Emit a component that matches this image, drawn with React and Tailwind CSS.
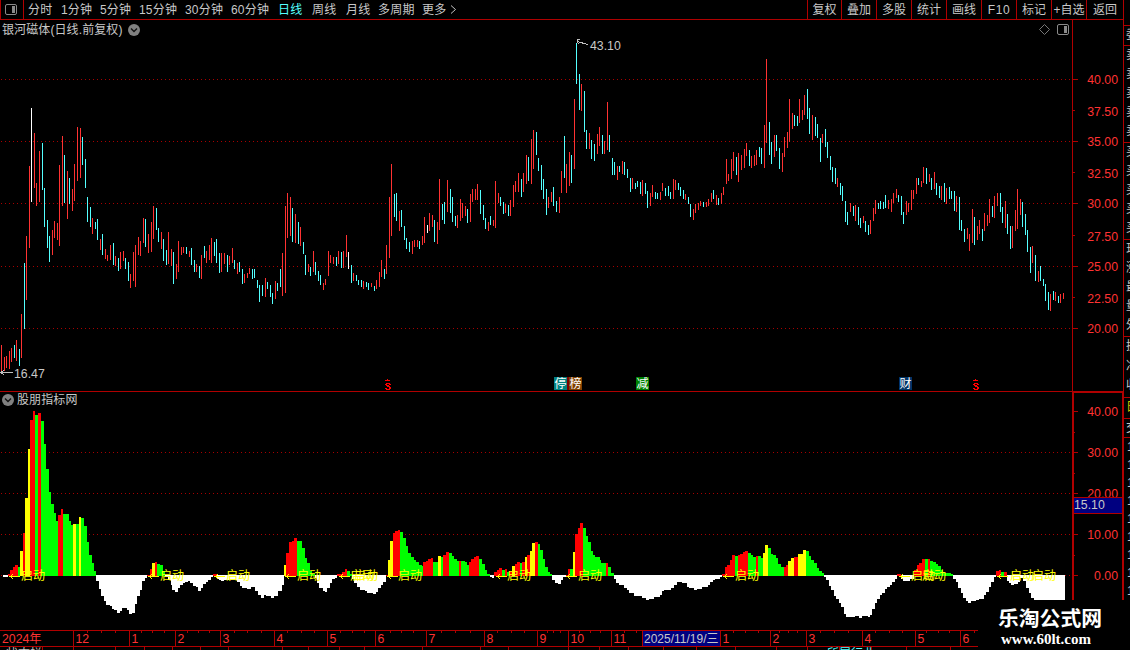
import React from "react";
import clsx from "clsx";

const RED = "#ff3232";
const CYAN = "#54ffff";
const LINE = "#b00000";

const periods = [
  { label: "分时", width: "w-[33px]" },
  { label: "1分钟", width: "w-[39px]" },
  { label: "5分钟", width: "w-[39px]" },
  { label: "15分钟", width: "w-[46px]" },
  { label: "30分钟", width: "w-[46px]" },
  { label: "60分钟", width: "w-[47px]" },
  { label: "日线", width: "w-[34px]", active: true },
  { label: "周线", width: "w-[34px]" },
  { label: "月线", width: "w-[32px]" },
  { label: "多周期", width: "w-[44px]" },
  { label: "更多", width: "w-[26px]" },
];

const tools = ["复权", "叠加", "多股", "统计", "画线", "F10", "标记", "+自选", "返回"];

// each entry: direction, x, high, low
const candles = `
r1,345,371 r4,357,371 r6,356,368 r9,351,369 r11,348,362 c14,345,358 r16,340,361 c19,349,366 r21,314,358 c24,263,329
r26,236,300 r29,166,248 w31,108,202 r34,133,188 r36,183,206 r39,151,202 c42,143,190 c44,188,227 c47,220,248 c49,236,262
r52,230,255 r54,221,238 r57,223,240 r59,165,246 r62,136,206 c64,155,203 r67,171,219 c69,178,204 r72,189,211 r74,164,201
r77,127,181 r80,128,178 c82,137,165 c85,159,188 c87,197,222 c90,207,227 r92,218,234 c95,222,229 c97,219,240 r100,239,250
c102,234,255 r105,249,259 r107,255,261 r110,245,260 c113,243,265 r115,256,266 c118,258,271 r120,252,269 r123,251,261 c125,258,269
c128,262,281 r130,274,288 r133,252,281 r135,245,287 r138,237,255 r140,241,256 r143,218,243 c145,219,247 r148,234,253 r151,222,252
r153,206,239 c156,208,230 c158,228,242 r161,232,249 c163,239,261 c166,250,265 r168,232,264 r171,249,266 c173,252,284 r176,264,279
r178,241,272 r181,247,255 r183,247,253 c186,247,254 r189,251,257 c191,248,265 c194,260,272 r196,264,272 c199,266,278 r201,255,279
c204,246,258 r206,251,263 r209,245,260 r211,238,263 c214,242,256 c216,239,263 c219,253,273 r221,253,272 r224,253,264 c227,255,272
r229,256,265 r232,248,263 c234,260,269 r237,263,274 c239,262,272 c242,269,284 r244,274,283 r247,273,278 r249,268,274 c252,269,279
c254,269,278 c257,280,288 c259,285,302 c262,285,296 r265,278,297 c267,282,289 c270,285,297 c272,293,304 r275,281,299 c277,283,291
c280,269,287 r282,253,296 r285,206,293 r287,193,238 r290,197,236 c292,208,242 r295,214,243 c298,222,244 r300,227,246 c303,242,254
c305,255,275 r308,264,272 c310,267,276 r313,251,272 c315,262,275 c318,271,281 c320,275,285 r323,283,290 r325,279,285 r328,251,276
r330,255,263 r333,257,264 c336,257,266 r338,251,264 c341,252,268 r343,251,268 r346,235,257 w348,252,269 c351,265,283 r353,273,281
c356,275,281 c358,280,285 c361,280,287 r363,281,289 c366,282,287 c368,283,290 r371,283,287 c374,286,291 r376,280,289 r379,272,287
r381,260,277 c384,269,279 r386,245,274 r389,197,258 r391,164,236 c394,194,217 c396,193,221 r399,211,231 c401,210,227 c404,226,240
c406,238,249 c409,242,252 r412,241,254 r414,240,247 r417,240,247 c419,241,249 r422,236,245 r424,217,243 w427,225,233 r429,213,231
r432,215,227 c434,220,242 r437,222,244 r439,179,230 c442,204,220 c444,202,224 r447,180,212 c450,189,213 c452,197,222 c455,216,226
r457,215,228 r460,199,221 r462,203,218 r465,206,216 c467,209,223 r470,194,222 r472,189,202 r475,189,200 r477,184,200 c480,190,214
c483,205,220 c485,218,229 r488,222,231 c490,216,225 r493,220,226 r495,181,228 r498,193,203 c500,197,206 c503,202,214 r505,204,213
c508,205,216 r510,200,216 r513,185,207 r515,181,192 r518,173,192 c521,179,197 r523,173,192 r526,155,184 c528,157,181 r531,139,184
r533,130,169 c536,132,155 c538,158,171 c541,165,190 c543,179,199 c546,189,215 r548,197,208 r551,192,202 c553,187,206 c556,201,212
r559,197,213 r561,171,193 c564,136,178 r566,164,193 r569,152,186 c571,155,183 r574,99,169 c576,43,84 c579,74,110 r581,84,111
c584,91,132 c586,130,149 r589,133,149 c591,140,159 c594,144,161 r597,134,154 r599,127,146 c602,135,154 r604,141,154 r607,102,150
c609,135,152 c612,158,175 c614,162,175 r617,166,180 c619,166,172 r622,161,174 c624,162,175 c627,169,178 c630,178,192 r632,178,189
c635,183,189 c637,181,187 c640,182,194 r642,180,196 c645,183,194 c647,191,208 r650,193,206 r652,185,197 c655,192,199 c657,193,199
r660,192,200 r662,183,191 c665,188,196 c668,186,196 c670,192,199 r673,179,199 r675,180,190 c678,183,190 c680,187,196 c683,190,199
r685,194,200 c688,197,204 c690,204,217 r693,209,220 r695,204,213 r698,203,210 r700,201,206 c703,202,207 r706,202,207 r708,199,206
r711,193,202 c713,190,199 r716,195,205 c718,198,205 r721,193,204 r723,187,195 r726,159,184 r728,174,181 r731,159,179 r733,152,171
c736,157,175 r738,153,182 r741,155,170 r744,149,168 r746,143,156 c749,150,166 r751,156,168 r754,155,166 r756,150,165 c759,147,157
c761,148,164 r764,125,168 r766,59,143 c769,122,155 c771,142,164 r774,135,157 c776,135,151 c779,148,169 r782,153,172 r784,137,157
r787,132,148 r789,99,142 r792,113,129 c794,115,126 c797,116,126 r799,99,123 r802,110,120 r804,95,115 c807,89,119 c809,108,134
r812,115,140 c815,117,136 c817,124,138 c820,138,162 r822,134,143 c825,129,147 c827,142,158 c830,156,170 c832,167,182 c835,168,184
r837,178,187 c840,183,195 c842,186,201 c845,201,222 c847,212,225 r850,203,212 c853,206,216 r855,205,221 c858,207,225 c860,218,228
r863,216,223 c865,221,232 c868,225,235 r870,220,234 r873,208,221 r875,200,214 c878,203,209 c880,201,209 c883,202,209 c885,195,208
r888,200,209 r891,199,212 r893,193,203 r896,189,198 c898,195,202 c901,196,215 c903,212,224 r906,201,215 r908,203,212 r911,190,210
r913,190,199 r916,178,194 c918,178,185 r921,181,187 r923,167,183 c926,168,184 r929,174,182 c931,178,190 r934,172,189 c936,183,195
c939,186,198 r941,186,200 c944,183,202 r946,188,204 c949,187,199 c951,191,199 c954,191,211 r956,196,212 c959,197,230 c961,220,231
c964,229,242 r967,228,239 r969,234,251 r972,209,243 c974,217,245 r977,226,240 r979,220,234 c982,229,241 r984,213,231 r987,215,226
r989,199,223 c992,206,217 r994,196,218 r997,193,206 c1000,193,212 c1002,207,223 r1005,201,228 c1007,214,234 c1010,226,249 r1012,226,248
r1015,210,231 r1017,189,229 r1020,199,215 c1022,202,227 c1025,214,235 c1027,230,252 c1030,247,273 r1032,246,263 c1035,255,281 r1038,271,282
c1040,266,281 c1043,279,286 c1045,284,301 c1048,292,310 r1050,294,311 c1053,291,300 r1055,292,301 c1058,296,303 r1060,294,303 r1063,293,299`
  .trim()
  .split(/\s+/)
  .map((item) => {
    const [x, high, low] = item.slice(1).split(",").map(Number);
    return { kind: item[0], x, high, low };
  });

// stepped histogram: colour, left edge, value edge; a step lasts until the next one starts
const steps = `
w3,577 r8,574 r10,570 r13,567 r15,565 g18,567 y20,551 r23,533 y25,498 y28,449 r30,420 r33,411 g35,415 r38,413 g41,421 g44,444
g46,469 g49,492 g51,504 g54,513 g56,521 r58,515 r61,509 g63,514 g66,514 g69,521 g71,525 y73,524 g76,524 y79,517 g81,518 g84,526
g87,542 g89,555 g92,563 g94,571 w96,581 w99,589 w101,596 w104,601 w106,605 w110,606 w112,609 w114,610 w117,613 w120,611 w122,608
w127,610 w129,614 w132,613 w135,604 w137,596 w140,590 w142,581 w145,578 r147,575 r150,569 y152,563 r155,562 g157,564 g160,565
g163,571 w165,577 w168,580 w171,585 w172,590 w175,592 w178,588 w180,585 w183,583 w185,582 w188,581 w190,583 w193,586 w196,587
w198,591 w201,588 w203,584 w206,582 w208,580 w211,577 r213,574 w217,579 w219,580 w221,581 w224,580 w237,582 w240,586 w242,588
w247,589 w251,587 w255,591 w258,595 w261,598 w264,595 w266,596 w271,598 w274,596 w278,591 w282,585 y284,565 r286,553 r289,542
r292,541 r294,538 g297,541 g302,548 g305,558 g307,563 g310,571 g312,574 w315,578 w317,583 w319,588 w323,591 w325,592 w327,588
w330,583 w332,579 w335,578 r337,574 r342,572 r345,569 g347,571 g350,574 w352,579 w354,583 w357,587 w360,590 w365,591 w367,593
w373,594 w376,592 w378,588 w381,585 w383,582 r386,575 y388,560 y390,541 r393,533 r395,531 r398,530 g400,532 g403,538 g406,546
g408,553 g411,557 g414,560 g416,562 g419,565 g422,566 r423,562 r426,561 r428,559 r431,558 g433,562 y438,556 g441,557 r443,555
r446,552 g449,553 g452,556 g454,559 g457,561 r459,561 g461,561 g465,562 g467,565 r469,562 r471,559 r474,557 r476,556 g479,559
g482,564 g485,570 g487,574 w490,577 w492,578 r494,572 r497,570 r499,568 g502,570 r505,569 g507,572 r509,571 y512,566 r515,564
r517,562 g520,563 r522,562 y525,557 r527,555 y530,551 y532,543 r535,542 g538,544 g540,550 g543,559 g545,567 g548,572 g550,574
w552,580 w555,583 w558,584 w561,580 w563,577 r566,575 r568,569 g570,569 y573,552 r575,534 r578,528 r580,523 g583,528 g586,536
g588,542 g591,551 g593,555 g595,557 g600,560 g601,563 r606,563 g608,567 g611,573 w614,579 w616,583 w619,585 w624,588 w627,590
w629,593 w634,596 w642,598 w646,600 w649,599 w654,597 w660,595 w662,591 w664,590 w671,588 w674,585 w677,582 w682,583 w687,587
w689,588 w694,590 w697,589 w702,587 w708,585 w710,582 w713,580 w715,579 w720,577 r722,574 r725,567 r727,565 r730,560 r732,555
g735,556 r738,555 r740,554 r743,552 r745,551 g748,553 g751,555 g753,557 r756,556 g758,556 g761,558 y763,553 y765,545 g768,548
g771,554 g773,555 g776,558 g778,564 g781,567 r784,567 r786,565 y788,561 y791,558 r794,557 y798,554 y803,550 g806,551 g809,556
g811,560 g814,563 g817,568 g819,571 g822,573 w824,577 w826,580 w829,586 w831,590 w834,596 w836,599 w839,603 w841,607 w844,614
w846,617 w855,616 w859,618 w862,616 w868,617 w870,615 w872,609 w875,603 w877,599 w880,595 w882,593 w885,589 w887,587 w890,585
w892,582 w895,579 r897,574 w901,579 w903,581 w910,579 r914,570 r917,565 r919,563 r922,559 g925,559 r928,559 g930,561 g933,562
g936,564 g938,566 g941,570 g943,573 g951,574 w953,579 w956,582 w958,588 w961,593 w963,598 w966,601 w968,603 w971,601 w976,600
w979,599 w984,595 w986,592 w989,587 w991,582 w994,577 r996,571 r999,570 g1001,572 r1004,572 w1007,581 w1009,583 w1011,585
w1014,584 w1018,582 w1020,578 w1023,581 w1026,588 w1029,593 w1031,598 w1034,600 w1065,575`
  .trim()
  .split(/\s+/)
  .map((item) => {
    const [x, y] = item.slice(1).split(",").map(Number);
    return { kind: item[0], x, y };
  });

const stepFill = { r: "#ff0000", g: "#00ff00", y: "#ffff00", w: "#ffffff" };
const candleFill = { r: RED, c: CYAN, w: "#ffffff" };

const signals = [
  { arrow: 10, texts: [21] },
  { arrow: 149, texts: [160] },
  { arrow: 215, texts: [226] },
  { arrow: 286, texts: [297] },
  { arrow: 340, texts: [350, 354] },
  { arrow: 388, texts: [398] },
  { arrow: 497, texts: [507] },
  { arrow: 567, texts: [578] },
  { arrow: 724, texts: [735] },
  { arrow: 900, texts: [911, 922] },
  { arrow: 998, texts: [1010, 1032] },
];

const priceLabels = [
  [79, "40.00"], [111, "37.50"], [141, "35.00"], [173, "32.50"], [203, "30.00"],
  [236, "27.50"], [266, "25.00"], [298, "22.50"], [328, "20.00"],
];
const indicatorLabels = [
  [411, "40.00"], [452, "30.00"], [493, "20.00"], [534, "10.00"], [575, "0.00"],
];

const months = [
  ["2024年", 73], ["12", 56], ["1", 46], ["2", 45], ["3", 54], ["4", 53], ["5", 48], ["6", 51], ["7", 58],
  ["8", 53], ["9", 31], ["10", 43], ["11", 31], ["2025/11/19/三", 78], ["1", 50], ["2", 36], ["3", 56],
  ["4", 53], ["5", 45], ["6", 163],
];
const weekTicks = [
  87, 101, 115, 141, 152, 164, 187, 198, 209, 234, 247, 261, 287, 301, 314, 340, 352, 364, 390, 401, 413, 441, 455,
  470, 497, 511, 524, 547, 553, 560, 579, 590, 600, 624, 636, 733, 745, 758, 779, 788, 797, 820, 834, 848, 875, 889,
  902, 926, 938, 949, 974,
];
const bottomTicks = [42, 73, 115, 144, 172, 200, 228, 282, 308, 339, 364, 422, 480, 508, 568, 599, 628, 663, 696, 735, 776, 807, 839, 871, 906, 950];

const Grid = ({ rows }) =>
  rows.map((y) => (
    <line key={y} x1="1" x2="1072" y1={y + 0.5} y2={y + 0.5} stroke="#a80000" strokeDasharray="1 3" />
  ));

const PanelIcon = ({ stroke, className }) => (
  <svg width="12" height="11" viewBox="0 0 12 11" className={className}>
    <rect x="0.5" y="0.5" width="11" height="10" rx="1.5" fill="none" stroke={stroke} />
    <rect x="7" y="2" width="3" height="7" fill={stroke} />
  </svg>
);

const RoundChevron = () => (
  <svg width="12" height="12" viewBox="0 0 12 12">
    <circle cx="6" cy="6" r="6" fill="#808080" />
    <path d="M3 4.5 6 7.5 9 4.5" fill="none" stroke="#111" strokeWidth="1.4" />
  </svg>
);

const Dividend = () => (
  <svg width="6" height="11" viewBox="0 0 6 11" shapeRendering="crispEdges">
    <path d="M2 0H3V1H5V2H0V1H2ZM1 4H5V5H6V6H4V5H2V6H4V7H5V8H6V10H5V11H1V10H0V9H2V10H4V8H2V7H1V6H0V5H1Z" fill="#f00" />
  </svg>
);

const Mark = ({ children, className }) => (
  <span className={clsx("flex h-[13px] w-[13px] items-center justify-center text-[12px] leading-none text-white", className)}>
    {children}
  </span>
);

const Header = () => (
  <header className="flex h-5 items-center border-b border-l border-[#b00000] text-[12px] leading-[18px] text-[#c8c8c8]">
    <div className="flex h-full w-[23px] shrink-0 items-center border-r border-[#b00000] pl-1">
      <PanelIcon stroke="#8a8a8a" />
    </div>
    <nav className="flex grow items-center pl-1 whitespace-nowrap">
      {periods.map((p) => (
        <span key={p.label} className={clsx("shrink-0 tracking-[0.2px]", p.width, p.active && "text-[#54ffff]")}>
          {p.label}
        </span>
      ))}
      <svg width="7" height="9" viewBox="0 0 7 9" className="ml-0.5">
        <path d="M1 0.5 5.5 4.5 1 8.5" fill="none" stroke="#c0c0c0" />
      </svg>
    </nav>
    <div className="flex h-full">
      {tools.map((tool, i) => (
        <span
          key={tool}
          className={clsx(
            "flex h-full items-center justify-center border-l border-[#b00000] whitespace-nowrap",
            i === 0 ? "w-[34px]" : i === 8 ? "w-[37px]" : "w-[35px]",
            tool === "F10" && "tracking-[0.6px]"
          )}
        >
          {tool}
        </span>
      ))}
    </div>
  </header>
);

const PriceChart = () => (
  <svg width="1072" height="338" viewBox="0 39 1072 338" className="block overflow-visible" shapeRendering="crispEdges">
    <Grid rows={[79, 141, 203, 266, 328]} />
    {candles.map((c) => (
      <rect key={c.x} x={c.x} y={c.high} width="1" height={c.low - c.high} fill={candleFill[c.kind]} />
    ))}
    <g fill="none" stroke="#c0c0c0">
      <path d="M577 41.5 588 44.5M580 39.5H577V42M577 42 579 44" />
      <path d="M1 372.5H13M4 370 1 372.5 4 375" />
    </g>
    <g fill="#c8c8c8" fontSize="12.3">
      <text x="590" y="50">43.10</text>
      <text x="14" y="378">16.47</text>
    </g>
  </svg>
);

const Axis = ({ labels, top, height, width, left, minor }) => (
  <svg width={width} height={height} viewBox={`${left} ${top} ${width} ${height}`} className="block" shapeRendering="crispEdges">
    {labels.map(([y, label]) => (
      <text key={y} x="1118" y={y + 5} textAnchor="end" fontSize="12.3" fill={RED}>
        {label}
      </text>
    ))}
    {labels.map(([y], i) => {
      // only every second price label sits on a grid line
      const offGrid = minor.some((m) => Math.abs(m - y) < 2);
      return offGrid ? null : <rect key={i} x="1073" y={y} width="5" height="1" fill={LINE} />;
    })}
    {minor.map((y) => (
      <rect key={y} x="1073" y={y} width="2" height="1" fill={LINE} />
    ))}
  </svg>
);

const Indicator = () => (
  <svg width="1072" height="222" viewBox="0 408 1072 222" className="block" shapeRendering="crispEdges">
    <Grid rows={[452, 493, 534, 575]} />
    {steps.slice(0, -1).map((s, i) => {
      const top = s.kind === "w" ? 575 : s.y;
      const bottom = s.kind === "w" ? s.y : 576;
      return <rect key={s.x} x={s.x} y={top} width={steps[i + 1].x - s.x} height={bottom - top} fill={stepFill[s.kind]} />;
    })}
    {signals.map(({ arrow, texts }) => (
      <g key={arrow} fill="#ffff00" fontSize="12">
        <path d={`M${arrow} 576.5H${arrow + 10}M${arrow + 3} 574.5 ${arrow} 576.5 ${arrow + 3} 578.5`} stroke="#ffff00" fill="none" />
        {texts.map((x) => (
          <text key={x} x={x} y="580">启动</text>
        ))}
      </g>
    ))}
  </svg>
);

const TimeAxis = () => (
  <div className="relative flex h-[17px] overflow-hidden border-y border-[#b00000] text-[12.3px] leading-[16px] text-[#ff3232]">
    {months.map(([label, width], i) => (
      <span
        key={i}
        style={{ width }}
        className={clsx(
          "h-full shrink-0 whitespace-nowrap",
          i > 0 && "border-l border-[#b00000]",
          i === 13 ? "bg-[#000080] pl-px text-[12px] text-[#c8c8c8]" : i === 0 ? "pl-[2px]" : "pl-[1.5px]"
        )}
      >
        {label}
      </span>
    ))}
    <svg width="1123" height="2" className="absolute top-0 left-0" shapeRendering="crispEdges">
      {weekTicks.map((x) => (
        <rect key={x} x={x} y="0" width="1" height="2" fill={LINE} />
      ))}
    </svg>
  </div>
);

const StatusEdge = () => (
  <div className="relative flex h-[3px] overflow-hidden text-[12px] leading-3 text-[#c0c0c0]">
    <span className="mt-px ml-[6px] w-[821px] shrink-0">状态栏</span>
    <span className="mt-px text-[#54ffff]">所属行业</span>
    <svg width="1123" height="3" className="absolute top-0 left-0" shapeRendering="crispEdges">
      {bottomTicks.map((x) => (
        <rect key={x} x={x} y="0" width="1" height="3" fill={LINE} />
      ))}
    </svg>
  </div>
);

const quoteRows = [
  { text: "", className: "h-[26px]" },
  { text: "委", className: "h-[20px]" },
  { text: "卖卖卖卖卖", className: "h-[97px]" },
  { text: "买买买买买", className: "h-[97px]" },
  { text: "现涨最量外", className: "h-[97px]" },
  { text: "换净收", className: "h-[61px] leading-[19.5px]" },
  { text: "日", className: "h-[21px] text-[#c8c800]" },
  { text: "交", className: "h-[19px]" },
];

const QuoteEdge = () => (
  <aside className="w-[6px] shrink-0 overflow-hidden text-[12px] leading-[19px] text-[#c8c8c8]">
    {quoteRows.map(({ text, className }, i) => (
      <div key={i} className={clsx("w-[16px] overflow-hidden border-b border-[#b00000] pl-[2px] break-all", className)}>
        {text}
      </div>
    ))}
    <div className="w-[12px] pl-[3px] leading-[18px] break-all">111111111</div>
  </aside>
);

const App = () => (
  <div className="relative flex h-[650px] w-[1130px] overflow-hidden bg-black font-['Liberation_Sans','Noto_Sans_CJK_SC',sans-serif]">
    <div className="flex w-[1124px] shrink-0 flex-col border-r border-[#b00000]">
      <Header />

      <section className="flex h-[371px]">
        <div className="w-[1072px] shrink-0">
          <div className="flex h-[19px] items-center pl-0.5 text-[12px] leading-[18px] text-[#c8c8c8]">
            <span className="w-[126px] whitespace-nowrap tracking-[0.1px]">银河磁体(日线.前复权)</span>
            <RoundChevron />
            <svg width="11" height="11" viewBox="0 0 11 11" className="ml-auto">
              <path d="M5.5 0.5 10.5 5.5 5.5 10.5 0.5 5.5Z" fill="none" stroke="#777" />
            </svg>
            <PanelIcon stroke="#8a8a8a" className="mr-[3px] ml-[7px]" />
          </div>
          <PriceChart />
          <div className="flex h-[14px]">
            <span className="mt-0.5 ml-[385px] w-[169px]"><Dividend /></span>
            <Mark className="bg-[#008080]">停</Mark>
            <span className="h-[13px] w-0.5 bg-[#800000]" />
            <Mark className="bg-[#804000]">榜</Mark>
            <Mark className="ml-[54px] bg-[#008000]">减</Mark>
            <Mark className="ml-[250px] bg-[#003366]">财</Mark>
            <span className="mt-0.5 ml-[61px]"><Dividend /></span>
          </div>
        </div>
        <div className="border-l border-[#b00000]">
          <Axis labels={priceLabels} left={1073} top={20} width={50} height={371} minor={[110, 172, 235, 297]} />
        </div>
      </section>

      <section className="flex h-[239px]">
        <div className="w-[1072px] shrink-0 border-t border-[#b00000]">
          <div className="flex h-[16px] items-center gap-[3px] pl-0.5 text-[12px] leading-[16px] text-[#c8c8c8]">
            <RoundChevron />
            <span className="tracking-[0.1px]">股朋指标网</span>
          </div>
          <Indicator />
        </div>
        <div className="relative -mr-px w-[52px] shrink-0 border-x-2 border-t-2 border-[#b00000]">
          <Axis labels={indicatorLabels} left={1074} top={393} width={48} height={237} minor={[432, 473, 555]} />
          <div className="absolute top-[104px] left-0 h-[17px] w-full border-y border-[#b00000] bg-[#000080] text-[12.3px] leading-[14px] text-[#c8c8c8]">
            15.10
          </div>
        </div>
      </section>

      <TimeAxis />
      <StatusEdge />
    </div>

    <QuoteEdge />

    <div className="absolute top-[600px] left-[978px] h-[50px] w-[152px] bg-black pt-[7px] pl-5 text-white">
      <div className="text-[20.8px] leading-[23px] font-bold whitespace-nowrap">乐淘公式网</div>
      <div className="pl-[3px] font-['Liberation_Serif',serif] text-[15px] leading-[18px] font-bold">www.60lt.com</div>
    </div>
  </div>
);

export default App;
